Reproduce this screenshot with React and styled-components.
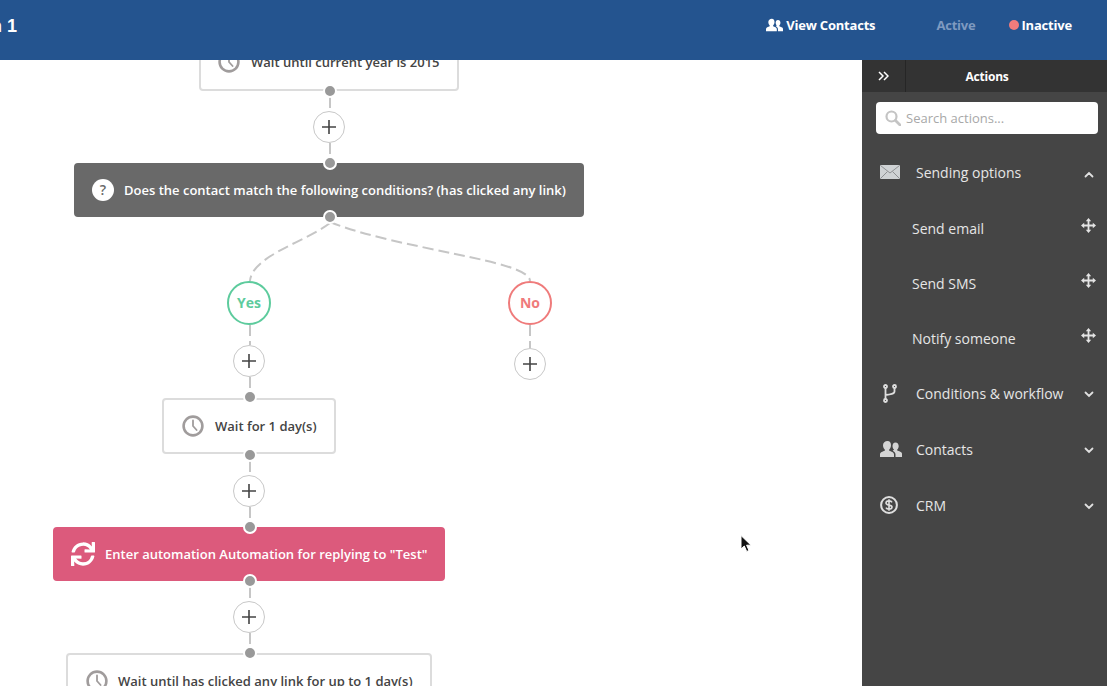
import React from "react";
import styled, { createGlobalStyle } from "styled-components";
import { FaSync } from "react-icons/fa";

const Global = createGlobalStyle`
  html, body { margin: 0; padding: 0; height: 100%; background: #fff; }
  body { font-family: "Open Sans", "Liberation Sans", sans-serif; overflow: hidden; }
  #root { height: 100%; }
`;

const Page = styled.div`
  width: 1107px;
  height: 686px;
  display: flex;
  flex-direction: column;
  overflow: hidden;
`;
const Header = styled.header`
  height: 60px;
  flex: none;
  background: #24548f;
  display: flex;
  align-items: center;
  color: #fff;
  position: relative;
  z-index: 2;
  overflow: hidden;
`;
const Title = styled.div`
  font-family: "Liberation Sans", Arial, sans-serif;
  font-weight: 700;
  font-size: 18px;
  margin: -8px 0 0 -9px;
  flex: 1;
  white-space: pre;
  line-height: 24px;
`;
const HeaderLink = styled.div`
  display: flex;
  align-items: center;
  gap: ${(p) => p.$inner || 3}px;
  font-size: 13px;
  font-weight: 700;
  letter-spacing: -0.2px;
  margin-top: -10px;
  color: ${(p) => (p.$dim ? "#7f9ac0" : "#fff")};
  margin-right: ${(p) => p.$gap}px;
`;
const StatusDot = styled.span`
  width: 10px;
  height: 10px;
  border-radius: 50%;
  background: #f27c7c;
  margin-right: 1px;
`;
const Body = styled.div`
  flex: 1;
  display: flex;
  min-height: 0;
`;
const Canvas = styled.main`
  flex: 1;
  position: relative;
  overflow: hidden;
  background: #fff;
`;
const Wires = styled.svg`
  position: absolute;
  left: 0;
  top: 0;
`;
const TONES = {
  plain: "background:#fff;border:2px solid #dcdcdc;color:#444;",
  gray: "background:#696969;border:2px solid #696969;color:#fff;",
  pink: "background:#dc5a7c;border:2px solid #dc5a7c;color:#fff;",
};
const FlowNode = styled.div`
  position: absolute;
  left: ${(p) => p.$x}px;
  top: ${(p) => p.$y}px;
  width: ${(p) => p.$w}px;
  height: ${(p) => p.$h}px;
  box-sizing: border-box;
  ${(p) => TONES[p.$tone]}
  border-radius: 4px;
  display: flex;
  align-items: center;
  padding-left: ${(p) => p.$pad}px;
  gap: ${(p) => p.$gap}px;
  font-size: 13px;
  font-weight: 600;
  white-space: nowrap;
  line-height: 18px;
`;
const Dot = styled.span`
  position: absolute;
  left: ${(p) => p.$x - 7}px;
  top: ${(p) => p.$y - 7}px;
  width: 10px;
  height: 10px;
  border-radius: 50%;
  background: #999;
  border: 2px solid #fff;
  z-index: 1;
`;
const Plus = styled.div`
  position: absolute;
  left: ${(p) => p.$x - 16}px;
  top: ${(p) => p.$y - 16}px;
  width: 32px;
  height: 32px;
  box-sizing: border-box;
  border-radius: 50%;
  border: 1px solid #c8c8c8;
  background: #fff;
  display: flex;
  align-items: center;
  justify-content: center;
`;
const Branch = styled.div`
  position: absolute;
  left: ${(p) => p.$x - 22}px;
  top: ${(p) => p.$y - 22}px;
  width: 44px;
  height: 44px;
  box-sizing: border-box;
  border-radius: 50%;
  border: 2px solid ${(p) => p.$color};
  color: ${(p) => p.$color};
  background: #fff;
  display: flex;
  align-items: center;
  justify-content: center;
  padding-bottom: 2px;
  font-size: 14px;
  font-weight: 700;
`;
const Help = styled.span`
  width: 22px;
  height: 22px;
  border-radius: 50%;
  background: #fff;
  color: #696969;
  display: flex;
  align-items: center;
  justify-content: center;
  font-size: 14px;
  font-weight: 600;
  flex: none;
`;
const Cursor = styled.svg`
  position: absolute;
  left: 739px;
  top: 474px;
`;
const Side = styled.aside`
  width: 245px;
  flex: none;
  background: #454545;
  color: #e4e4e4;
  display: flex;
  flex-direction: column;
`;
const SideBar = styled.div`
  height: 32px;
  background: #333;
  display: flex;
  align-items: center;
  flex: none;
`;
const Toggle = styled.div`
  width: 44px;
  height: 100%;
  box-sizing: border-box;
  border-right: 1px solid #262626;
  display: flex;
  align-items: center;
  justify-content: center;
`;
const SideTitle = styled.div`
  flex: 1;
  text-align: center;
  font-size: 12px;
  font-weight: 700;
  color: #fff;
  letter-spacing: -0.2px;
  padding-right: 39px;
`;
const Search = styled.div`
  margin: 10px 9px 11px 14px;
  height: 32px;
  background: #fff;
  border-radius: 4px;
  display: flex;
  align-items: center;
  gap: 5px;
  padding-left: 9px;
  color: #a8a8a8;
  font-size: 13px;
  flex: none;
`;
const Row = styled.div`
  display: flex;
  align-items: center;
  box-sizing: border-box;
  height: ${(p) => (p.$child ? 55 : 56)}px;
  padding-left: ${(p) => (p.$child ? 50 : 18)}px;
  padding-bottom: ${(p) => (p.$child ? 0 : 2)}px;
  position: relative;
  font-size: 14px;
  font-weight: 500;
  color: #e6e6e6;
`;
const RowIcon = styled.span`
  width: ${(p) => p.$w || 36}px;
  margin-left: ${(p) => p.$ml || 0}px;
  flex: none;
  display: flex;
  align-items: center;
`;
const RowEnd = styled.span`
  position: absolute;
  right: ${(p) => p.$r}px;
  top: 50%;
  margin-top: ${(p) => p.$dy}px;
  display: flex;
`;

const Clock = ({ size = 22 }) => (
  <svg width={size} height={size} viewBox="0 0 22 22" fill="none" stroke="#a09c9c" strokeLinecap="round" style={{ flex: "none" }}>
    <circle cx="11" cy="11" r="9.4" strokeWidth="2.6" />
    <path d="M11 5.5V11l3.6 4" strokeWidth="1.8" />
  </svg>
);
const PlusGlyph = () => (
  <svg width="14" height="14" viewBox="0 0 14 14" stroke="#444" strokeWidth="1.6">
    <path d="M0 7H14M7 0V14" />
  </svg>
);
const Users = ({ w = 22, h = 18, c = "#d4d4d4" }) => (
  <svg width={w} height={h} viewBox="0 0 22 18" fill={c}>
    <path d="M7.5 1C10 1 11 3 11 5.2c0 1.8-.8 3.4-1.8 4.3v1.2c2 .8 4.8 1.6 4.8 3.6V17H0v-2.7c0-2 2.800-2.800 4.800-3.600V9.500C3.800 8.600 3 7 3 5.200 3 3 5 1 7.500 1z" />
    <path d="M15.500 2.500c2 0 3.200 1.600 3.200 3.500 0 1.500-.6 2.800-1.500 3.600v1c1.600.7 4.800 1.400 4.800 3.200V17h-6.500v-2.700c0-1.700-1.300-2.800-2.800-3.600.2-.3.8-.6 1.300-.9V9.600c-.9-.8-1.500-2.100-1.500-3.600 0-1.900 1-3.500 3-3.500z" />
  </svg>
);
const Chevron = ({ up, c = "#e0e0e0" }) => (
  <svg width="10" height="7" viewBox="0 0 10 7" fill="none" stroke={c} strokeWidth="1.800" strokeLinecap="round">
    <path d={up ? "M1.500 5.500L5 2l3.500 3.500" : "M1.500 1.500L5 5l3.500-3.500"} />
  </svg>
);
const Move = () => (
  <svg width="15" height="15" viewBox="0 0 15 15" fill="#e4e4e4" stroke="#e4e4e4">
    <path d="M7.500 2v11M2 7.500h11" strokeWidth="1.800" />
    <path d="M7.500 0l2.700 3.200H4.800zM7.500 15l2.700-3.200H4.800zM0 7.500l3.200-2.700v5.400zM15 7.500l-3.200-2.700v5.400z" stroke="none" />
  </svg>
);
const Mail = () => (
  <svg width="20" height="14" viewBox="0 0 20 14">
    <rect x="0" y="0" width="20" height="14" rx="1" fill="#cfd2d4" />
    <path d="M.5.500L10 8l9.500-7.500M.5 13.500L7.500 6.500M19.500 13.500L12.500 6.500" fill="none" stroke="#8f9193" strokeWidth="1" />
  </svg>
);
const Fork = () => (
  <svg width="14" height="19" viewBox="0 0 14 19" fill="none" stroke="#dedede" strokeWidth="1.800">
    <circle cx="2.500" cy="2.500" r="1.500" />
    <circle cx="11.500" cy="2.500" r="1.500" />
    <circle cx="2.500" cy="16.500" r="1.500" />
    <path d="M2.500 4v11M11.500 4v3.500c0 2.500-4 3-9 3.500" />
  </svg>
);
const Dollar = () => (
  <svg width="18" height="18" viewBox="0 0 18 18" fill="none" stroke="#dedede">
    <circle cx="9" cy="9" r="7.900" strokeWidth="2" />
    <path d="M12 6.300C11.500 5.300 10.300 4.900 9 4.900c-1.700 0-3 .8-3 2.100 0 2.900 6 1.300 6 4 0 1.300-1.300 2.100-3 2.100-1.400 0-2.500-.5-3-1.500M9 3.300v11.400" strokeWidth="1.600" />
  </svg>
);
const Lens = () => (
  <svg width="16" height="16" viewBox="0 0 16 16" fill="none" stroke="#c4c4c4" style={{ flex: "none" }}>
    <circle cx="6.500" cy="6.500" r="5" strokeWidth="2.200" />
    <path d="M10.500 10.500L15 15" strokeWidth="2.800" strokeLinecap="round" />
  </svg>
);

const wirePaths = [
  "M330 37V51", "M330 83V97",
  "M330 163C305 182 252 196 250 221",
  "M330 162C400 190 530 200 530 221",
  "M250 265V285", "M250 317V331", "M530 265V288",
  "M250 401V425", "M250 447V461", "M250 527V551", "M250 573V587",
];
const dots = [[330, 31], [330, 103], [330, 157], [250, 337], [250, 395], [250, 467], [250, 521], [250, 593]];
const pluses = [[329, 67], [249, 301], [530, 304], [249, 431], [249, 557]];

export default function App() {
  return (
    <Page>
      <Global />
      <Header>
        <Title>n 1</Title>
        <HeaderLink $gap={61}><Users w={17} h={14} c="#fff" /> View Contacts</HeaderLink>
        <HeaderLink $dim $gap={33}>Active</HeaderLink>
        <HeaderLink $gap={35} $inner={2}><StatusDot /> Inactive</HeaderLink>
      </Header>
      <Body>
        <Canvas>
          <Wires width="862" height="626" fill="none" stroke="#c6c6c6" strokeWidth="2" strokeDasharray="11 5">
            {wirePaths.map((d) => <path key={d} d={d} />)}
          </Wires>
          <FlowNode $x={199} $y={-27} $w={260} $h={58} $tone="plain" $pad={17} $gap={11}>
            <Clock /><span>Wait until current year is 2015</span>
          </FlowNode>
          <FlowNode $x={74} $y={103} $w={510} $h={54} $tone="gray" $pad={16} $gap={10}>
            <Help>?</Help><span>Does the contact match the following conditions? (has clicked any link)</span>
          </FlowNode>
          <FlowNode $x={162} $y={338} $w={174} $h={56} $tone="plain" $pad={18} $gap={11}>
            <Clock /><span>Wait for 1 day(s)</span>
          </FlowNode>
          <FlowNode $x={53} $y={467} $w={392} $h={54} $tone="pink" $pad={16} $gap={10}>
            <FaSync size={24} color="#fff" style={{ flex: "none" }} /><span>Enter automation Automation for replying to "Test"</span>
          </FlowNode>
          <FlowNode $x={66} $y={593} $w={366} $h={56} $tone="plain" $pad={18} $gap={10}>
            <Clock /><span>Wait until has clicked any link for up to 1 day(s)</span>
          </FlowNode>
          <Branch $x={249} $y={243} $color="#5dcb9d">Yes</Branch>
          <Branch $x={530} $y={243} $color="#ef7b7b">No</Branch>
          {pluses.map(([x, y]) => <Plus key={`${x}-${y}`} $x={x} $y={y}><PlusGlyph /></Plus>)}
          {dots.map(([x, y]) => <Dot key={`${x}-${y}`} $x={x} $y={y} />)}
          <Cursor width="13" height="20" viewBox="0 0 13 20">
            <path d="M2 1.500V15l3.300-3 2.400 5.500 2.300-1-2.400-5.300H12z" fill="#111" stroke="#fff" strokeWidth="1" />
          </Cursor>
        </Canvas>
        <Side>
          <SideBar>
            <Toggle>
              <svg width="11" height="10" viewBox="0 0 11 10" fill="none" stroke="#fff" strokeWidth="1.500">
                <path d="M1 1l4 4-4 4M6 1l4 4-4 4" />
              </svg>
            </Toggle>
            <SideTitle>Actions</SideTitle>
          </SideBar>
          <Search><Lens /><span>Search actions...</span></Search>
          <Row>
            <RowIcon><Mail /></RowIcon>Sending options
            <RowEnd $r={13} $dy={-2}><Chevron up /></RowEnd>
          </Row>
          <Row $child>Send email<RowEnd $r={11} $dy={-11}><Move /></RowEnd></Row>
          <Row $child>Send SMS<RowEnd $r={11} $dy={-11}><Move /></RowEnd></Row>
          <Row $child>Notify someone<RowEnd $r={11} $dy={-11}><Move /></RowEnd></Row>
          <Row>
            <RowIcon $ml={3} $w={33}><Fork /></RowIcon>Conditions &amp; workflow
            <RowEnd $r={13} $dy={-3}><Chevron /></RowEnd>
          </Row>
          <Row>
            <RowIcon><Users /></RowIcon>Contacts
            <RowEnd $r={13} $dy={-3}><Chevron /></RowEnd>
          </Row>
          <Row>
            <RowIcon><Dollar /></RowIcon>CRM
            <RowEnd $r={13} $dy={-3}><Chevron /></RowEnd>
          </Row>
        </Side>
      </Body>
    </Page>
  );
}
